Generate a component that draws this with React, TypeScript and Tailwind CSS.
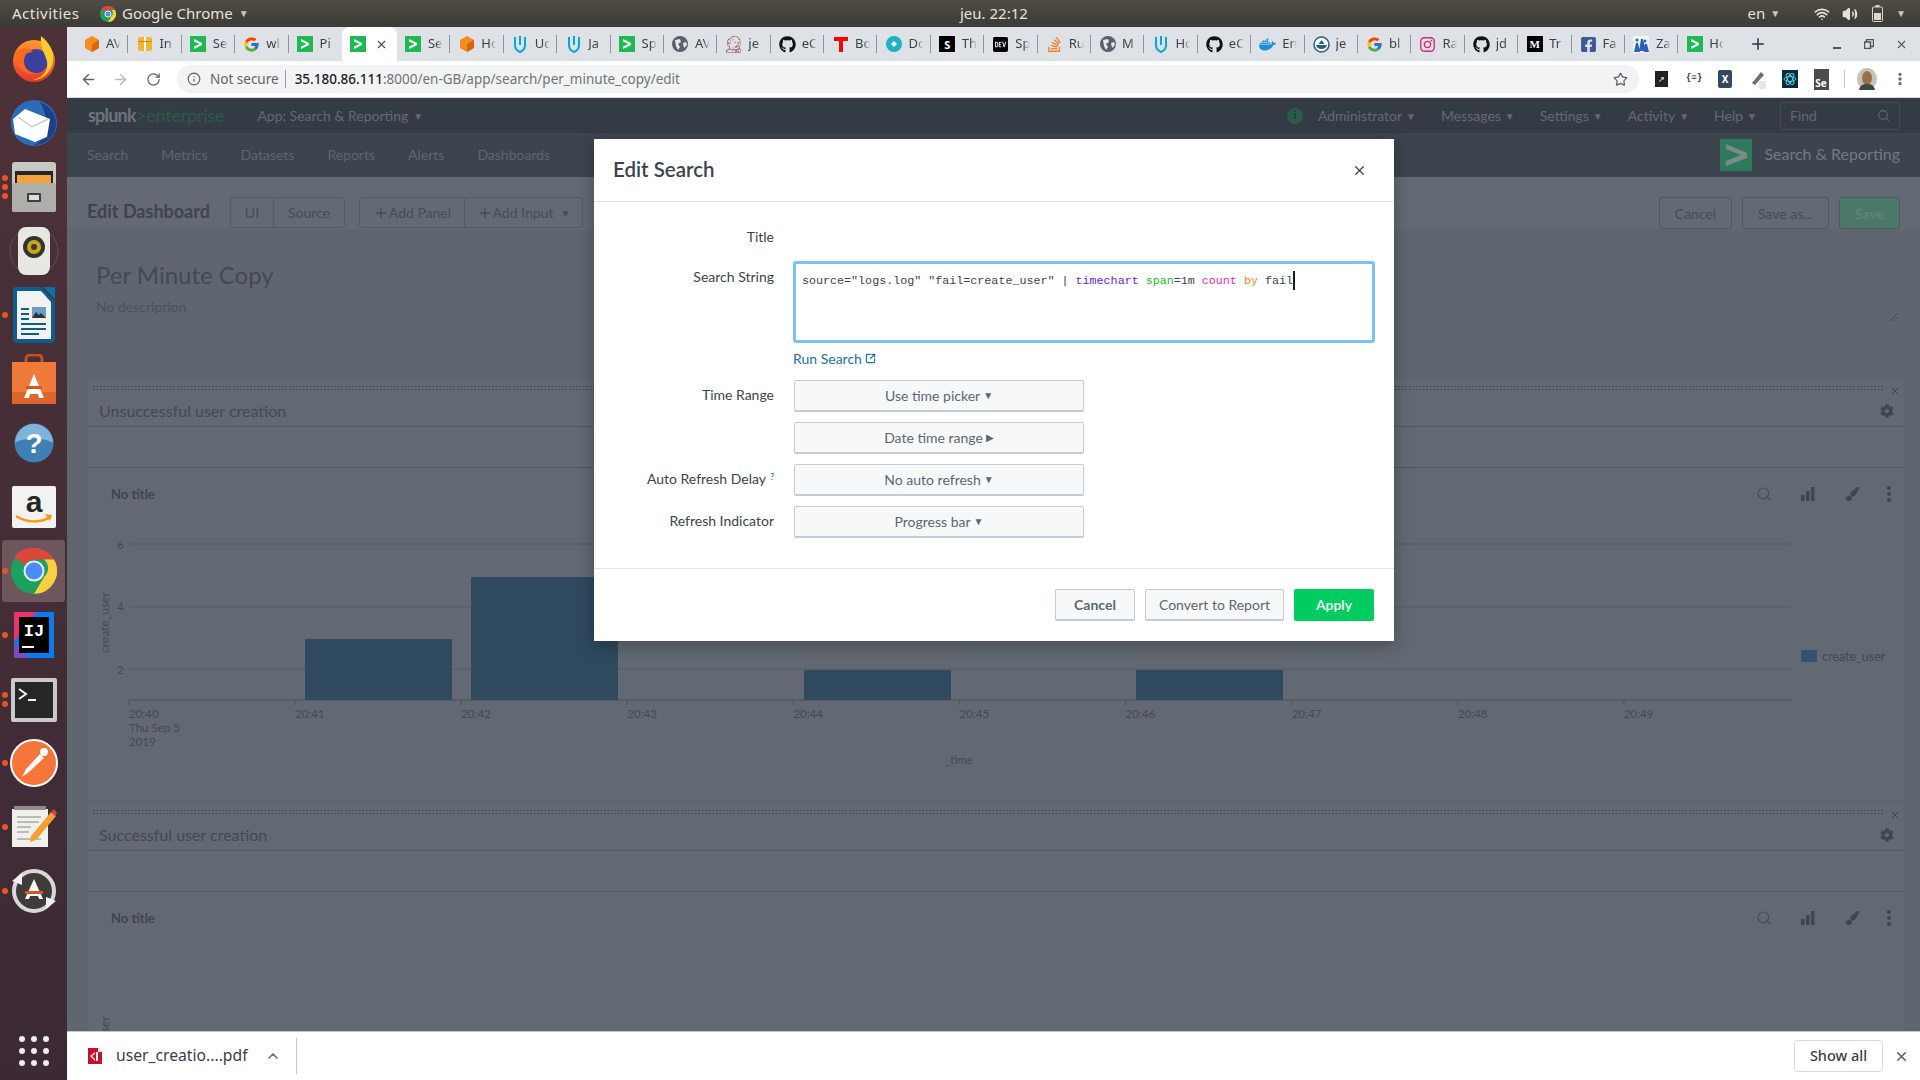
import { ReactNode } from "react";
import {
  ArrowLeft,
  ArrowRight,
  ChevronUp,
  Info,
  MoreVertical,
  Plus,
  RotateCw,
  Search,
  SquareArrowOutUpRight,
  Star,
  Volume2,
  Wifi,
  X,
} from "lucide-react";
import {
  FaCog,
  FaDev,
  FaDocker,
  FaFacebookSquare,
  FaGithub,
  FaInstagram,
  FaJenkins,
  FaPaintBrush,
  FaStackOverflow,
} from "react-icons/fa";
import { FcGoogle } from "react-icons/fc";

const SplunkFav = () => (
  <svg width="16" height="16" viewBox="0 0 16 16">
    <rect width="16" height="16" fill="#1fb954" />
    <path d="M4 3l8 4v2l-8 4v-2.4L9.6 8 4 5.4z" fill="#fff" />
  </svg>
);
const Hex = ({ color }: { color: string }) => (
  <svg width="16" height="16" viewBox="0 0 16 16">
    <path d="M8 0l7 4v8l-7 4-7-4V4z" fill={color} />
    <path d="M8 8l7-4v8l-7 4z" fill="#d9660f" />
  </svg>
);
const Box = () => (
  <svg width="16" height="16" viewBox="0 0 16 16">
    <rect x="1" y="1" width="14" height="14" rx="2" fill="#f5b335" />
    <rect x="7" y="1" width="2" height="14" fill="#fff" />
    <rect x="1" y="5" width="14" height="1" fill="#c98a17" />
  </svg>
);
const Uda = () => (
  <svg width="16" height="18" viewBox="0 0 16 18" fill="none" stroke="#02a9d8" strokeWidth="2">
    <path d="M3 2v8c0 4 2.500 6 5 7 2.500-1 5-3 5-7V2" />
    <path d="M8 1v9" />
  </svg>
);
const Globe = () => (
  <svg width="16" height="16" viewBox="0 0 16 16">
    <circle cx="8" cy="8" r="8" fill="#5a6068" />
    <path d="M3 4l5-1 1 3-3 2 2 3-2 3-2-4zM11 7l3-1 1 3-3 3z" fill="#e6e8ea" />
  </svg>
);
const Red = () => (
  <svg width="16" height="16" viewBox="0 0 16 16">
    <path d="M1 1h14v4h-5v11H6V5H1z" fill="#f00" />
  </svg>
);
const Teal = () => (
  <svg width="16" height="16" viewBox="0 0 16 16">
    <circle cx="8" cy="8" r="8" fill="#1db2c4" />
    <path d="M5 8l3-3 3 3-3 3z" fill="#fff" />
  </svg>
);
const BlackS = ({ t, serif }: { t: string; serif?: boolean }) => (
  <span
    className={`flex h-[16px] w-[16px] items-center justify-center bg-black text-[11px] font-bold leading-none text-white ${
      serif ? "font-['Liberation_Serif',serif]" : ""
    }`}
  >
    {t}
  </span>
);
const JeCircle = () => (
  <svg width="17" height="17" viewBox="0 0 17 17">
    <circle cx="8.500" cy="8.500" r="7.500" fill="#fff" stroke="#2a5f86" strokeWidth="1.500" />
    <path d="M3 9h11c-1 3-3 4-5.500 4S4 12 3 9z" fill="#2a5f86" />
    <path d="M8.500 4l3 4h-6z" fill="#2a5f86" />
  </svg>
);
const People = () => (
  <svg width="16" height="17" viewBox="0 0 16 17">
    <rect width="16" height="17" fill="#f2f4f7" />
    <path d="M1 16l2-9h2l2 9zM6 15l2-12h2l3 12zM11 16l1-8h2l2 8z" fill="#2a62b8" />
    <circle cx="4" cy="4" r="1.500" fill="#2a62b8" />
    <circle cx="12" cy="5" r="1.500" fill="#2a62b8" />
  </svg>
);

const g = <SplunkFav />;
const tabs: { icon: ReactNode; label: string; active?: boolean }[] = [
  { icon: <Hex color="#f58a1f" />, label: "AV" },
  { icon: <Box />, label: "In" },
  { icon: g, label: "Se" },
  { icon: <FcGoogle size={17} />, label: "wl" },
  { icon: g, label: "Pi" },
  { icon: g, label: "", active: true },
  { icon: g, label: "Se" },
  { icon: <Hex color="#f58a1f" />, label: "Ho" },
  { icon: <Uda />, label: "Uc" },
  { icon: <Uda />, label: "Ja" },
  { icon: g, label: "Sp" },
  { icon: <Globe />, label: "AV" },
  { icon: <FaJenkins size={17} color="#8f4a3a" />, label: "je" },
  { icon: <FaGithub size={17} color="#111" />, label: "eC" },
  { icon: <Red />, label: "Bo" },
  { icon: <Teal />, label: "Do" },
  { icon: <BlackS t="S" />, label: "Th" },
  { icon: <FaDev size={17} color="#000" />, label: "Sp" },
  { icon: <FaStackOverflow size={17} color="#f48024" />, label: "Ru" },
  { icon: <Globe />, label: "M" },
  { icon: <Uda />, label: "Ho" },
  { icon: <FaGithub size={17} color="#111" />, label: "eC" },
  { icon: <FaDocker size={17} color="#1d8fd8" />, label: "En" },
  { icon: <JeCircle />, label: "je" },
  { icon: <FcGoogle size={17} />, label: "bl" },
  { icon: <FaInstagram size={17} color="#d6267f" />, label: "Ra" },
  { icon: <FaGithub size={17} color="#111" />, label: "jd" },
  { icon: <BlackS t="M" serif />, label: "Tr" },
  { icon: <FaFacebookSquare size={17} color="#3b5998" />, label: "Fa" },
  { icon: <People />, label: "Za" },
  { icon: g, label: "Ho" },
];

const Firefox = () => (
  <svg width="50" height="50" viewBox="0 0 50 50">
    <defs>
      <linearGradient id="ff" x1="0" y1="0" x2="0" y2="1">
        <stop offset="0" stopColor="#ff9a2e" />
        <stop offset="1" stopColor="#e8342c" />
      </linearGradient>
    </defs>
    <circle cx="25" cy="27" r="21" fill="url(#ff)" />
    <circle cx="27" cy="27" r="12" fill="#3b3f9e" />
    <path d="M32 2c8 6 14 16 12 26-2 10-10 18-20 18 12-3 17-12 13-22-2-6-6-10-5-22z" fill="#ffcb2e" />
    <path d="M6 18c8-6 14-3 18 0-6 0-10 3-10 9 0 7 6 12 13 12-10 3-20-4-21-21z" fill="#ff6a1f" />
  </svg>
);
const Thunderbird = () => (
  <svg width="48" height="48" viewBox="0 0 48 48">
    <circle cx="24" cy="24" r="23" fill="#2b6cb8" />
    <path d="M30 3c10 4 16 12 16 21 0 13-10 22-22 22 14-6 16-26 6-43z" fill="#1a3f8f" />
    <path d="M3 20l12-10 25 10-3 18-12 5-20-8z" fill="#fff" />
    <path d="M8 18l14 10 16-8" fill="none" stroke="#c9ccd0" strokeWidth="1.500" />
  </svg>
);
const Files = () => (
  <svg width="44" height="50" viewBox="0 0 44 50">
    <rect width="44" height="50" rx="3" fill="#c9c9c4" />
    <rect x="3" y="9" width="38" height="12" fill="#262626" />
    <rect x="5" y="13" width="34" height="8" fill="#f2a13b" />
    <rect y="21" width="44" height="29" rx="2" fill="#aeaeaa" />
    <rect x="15" y="31" width="14" height="9" rx="1" fill="#3e3e3e" />
    <rect x="17" y="33" width="10" height="5" fill="#dddddd" />
  </svg>
);
const Rhythm = () => (
  <svg width="50" height="50" viewBox="0 0 50 50">
    <circle cx="25" cy="25" r="24" fill="none" stroke="#5b4f5d" strokeWidth="1" />
    <rect x="9" y="1" width="32" height="48" rx="8" fill="#e8e8e2" />
    <circle cx="25" cy="21" r="11" fill="#333" />
    <circle cx="25" cy="21" r="7" fill="#c5a918" />
    <circle cx="25" cy="21" r="3" fill="#3a3a3a" />
  </svg>
);
const Writer = () => (
  <svg width="42" height="56" viewBox="0 0 42 56">
    <path d="M2 0h26l14 14v38a4 4 0 0 1-4 4H4a4 4 0 0 1-4-4V2a2 2 0 0 1 2-2z" fill="#0e5e8c" />
    <path d="M4 4h24l10 11v37H4z" fill="#f2f2f2" />
    <path d="M30 0l12 12V0z" fill="#0b6fa8" />
    <rect x="8" y="21" width="8" height="2" fill="#0e5e8c" />
    <rect x="8" y="26" width="8" height="2" fill="#0e5e8c" />
    <rect x="8" y="31" width="8" height="2" fill="#0e5e8c" />
    <rect x="19" y="20" width="14" height="11" fill="#6b9fc6" />
    <path d="M19 31l4-6 3 3 2-2 5 5z" fill="#333" />
    <rect x="8" y="36" width="25" height="2" fill="#0e5e8c" />
    <rect x="8" y="41" width="25" height="2" fill="#0e5e8c" />
    <rect x="8" y="46" width="18" height="2" fill="#0e5e8c" />
  </svg>
);
const Store = () => (
  <svg width="44" height="50" viewBox="0 0 44 50">
    <path d="M14 12V5a4 4 0 0 1 4-4h8a4 4 0 0 1 4 4v7" fill="none" stroke="#c9501d" strokeWidth="3" />
    <path d="M0 8h44v42H0z" fill="#f07a3a" />
    <path d="M0 38h44v12H0z" fill="#e0652a" />
    <path d="M22 20l10 24h-5l-1-4h-8l-1 4h-5z" fill="#fff" />
    <rect x="14" y="32" width="16" height="3" fill="#e0521d" />
  </svg>
);
const Help = () => (
  <svg width="40" height="40" viewBox="0 0 40 40">
    <circle cx="20" cy="20" r="19.500" fill="#3f7fb5" />
    <path d="M1 20a19 19 0 0 1 38 0c-8-6-30-6-38 0z" fill="#7fb3dc" />
    <text x="20" y="30" textAnchor="middle" fontSize="28" fontWeight="700" fill="#fff" fontFamily="Liberation Sans, sans-serif">?</text>
  </svg>
);
const Amazon = () => (
  <svg width="44" height="42" viewBox="0 0 44 42">
    <rect width="44" height="42" rx="2" fill="#f2f2f2" />
    <text x="22" y="26" textAnchor="middle" fontSize="30" fontWeight="700" fill="#262626" fontFamily="Liberation Sans, sans-serif">a</text>
    <path d="M4 30c10 7 26 7 34 1" fill="none" stroke="#f59a13" strokeWidth="2.500" />
    <path d="M33 28l7 1-2 6z" fill="#f59a13" />
  </svg>
);
const Chrome = () => (
  <svg width="46" height="46" viewBox="0 0 46 46">
    <circle cx="23" cy="23" r="23" fill="#1ba160" />
    <path d="M23 0a23 23 0 0 1 20 11.500H23a11.500 11.500 0 0 0-10 6L4 8A23 23 0 0 1 23 0z" fill="#dc463b" />
    <path d="M43 11.500A23 23 0 0 1 23 46l10-17a11.500 11.500 0 0 0 0-17.500z" fill="#fdcf40" />
    <circle cx="23" cy="23" r="10.500" fill="#e9eef8" />
    <circle cx="23" cy="23" r="8.500" fill="#4b8bf5" />
  </svg>
);
const Idea = () => (
  <svg width="40" height="46" viewBox="0 0 40 46">
    <rect width="40" height="46" fill="#0a7bf0" />
    <path d="M0 0h22L0 30z" fill="#e8336b" />
    <path d="M0 30l14 16H0z" fill="#7a4bc2" />
    <rect x="5" y="5" width="30" height="36" fill="#000" />
    <rect x="8" y="34" width="12" height="2" fill="#fff" />
    <text x="20" y="24" textAnchor="middle" fontSize="17" fontWeight="700" fill="#fff" fontFamily="Liberation Mono, monospace">IJ</text>
  </svg>
);
const Terminal = () => (
  <svg width="46" height="44" viewBox="0 0 46 44" className="mt-[2px]">
    <rect width="46" height="44" rx="2" fill="#c9c9c9" />
    <rect x="4" y="4" width="38" height="36" fill="#262626" />
    <path d="M8 11l7 5-7 5" fill="none" stroke="#f2f2f2" strokeWidth="2" />
    <rect x="17" y="21" width="8" height="2" fill="#f2f2f2" />
  </svg>
);
const Postman = () => (
  <svg width="48" height="48" viewBox="0 0 48 48">
    <circle cx="24" cy="24" r="23" fill="#f7743a" stroke="#fff" strokeWidth="2" />
    <path d="M12 38l4-8 14-15 4 4-15 14z" fill="#fff" />
    <circle cx="34" cy="13" r="4" fill="#fff" />
  </svg>
);
const Gedit = () => (
  <svg width="46" height="42" viewBox="0 0 46 42">
    <rect x="1" y="3" width="36" height="38" fill="#f1f1ec" />
    <path d="M3 0h32v4H3z" fill="#8d8d8d" />
    <path d="M6 11h24M6 16h22M6 21h14M6 26h12M6 33h24" stroke="#a9a9a9" strokeWidth="1.500" />
    <path d="M20 30l20-24 5 4-20 24-6 2z" fill="#f2a02f" />
    <path d="M40 6l3-3 3 4-2 3z" fill="#d8433a" />
  </svg>
);
const Updater = () => (
  <svg width="44" height="48" viewBox="0 0 44 48">
    <circle cx="22" cy="24" r="20" fill="#3d3c3a" stroke="#d8d8d8" strokeWidth="4" />
    <path d="M22 12l9 20h-4l-1-3h-8l-1 3h-4z" fill="#fff" />
    <rect x="13" y="24" width="18" height="3" fill="#e0521d" />
    <path d="M0 14l10-8v12zM44 34l-10 8V30z" fill="#f2f2f2" />
  </svg>
);

const dock: { icon: ReactNode; dots: number; active?: boolean }[] = [
  { icon: <Firefox />, dots: 0 },
  { icon: <Thunderbird />, dots: 0 },
  { icon: <Files />, dots: 3 },
  { icon: <Rhythm />, dots: 0 },
  { icon: <Writer />, dots: 1 },
  { icon: <Store />, dots: 0 },
  { icon: <Help />, dots: 0 },
  { icon: <Amazon />, dots: 0 },
  { icon: <Chrome />, dots: 1, active: true },
  { icon: <Idea />, dots: 1 },
  { icon: <Terminal />, dots: 2 },
  { icon: <Postman />, dots: 1 },
  { icon: <Gedit />, dots: 1 },
  { icon: <Updater />, dots: 1 },
];

const Dock = () => (
  <div className="flex w-[67px] shrink-0 flex-col bg-gradient-to-b from-[#4d3138] to-[#3b2a35]">
    {dock.map((d, i) => (
      <div key={i} className="relative flex h-[64px] items-center justify-center">
        {d.active && <div className="absolute inset-x-[2px] inset-y-[1px] rounded-[3px] bg-[#6d565c]" />}
        <div className="relative flex items-center justify-center">{d.icon}</div>
        {d.dots > 0 && (
          <div className="absolute left-[2px] top-0 flex h-full flex-col justify-center gap-[3px]">
            {Array.from({ length: d.dots }).map((_, j) => (
              <span key={j} className="h-[6px] w-[6px] rounded-full bg-[#e95420]" />
            ))}
          </div>
        )}
      </div>
    ))}
    <div className="mt-auto mb-[14px] grid grid-cols-3 gap-x-[6px] gap-y-[6px] self-center">
      {Array.from({ length: 9 }).map((_, i) => (
        <span key={i} className="h-[6px] w-[6px] rounded-full bg-[#f0eef0]" />
      ))}
    </div>
  </div>
);

const TopBar = () => (
  <div className="flex h-[27px] items-center bg-gradient-to-b from-[#4f4c44] to-[#3b3a35] font-['Noto_Sans',sans-serif] text-[15px] text-[#e4e2dc]">
    <div className="flex w-[960px] items-center">
      <span className="ml-[12px] w-[88px] tracking-[0.5px]">Activities</span>
      <svg width="16" height="16" viewBox="0 0 16 16" className="mr-[6px]">
        <circle cx="8" cy="8" r="8" fill="#1ba160" />
        <path d="M8 0a8 8 0 0 1 7 4H8a4 4 0 0 0-3.500 2L1.500 2.800A8 8 0 0 1 8 0z" fill="#dc463b" />
        <path d="M15 4a8 8 0 0 1-7 12l3.500-6a4 4 0 0 0 0-6z" fill="#fdcf40" />
        <circle cx="8" cy="8" r="3" fill="#4b8bf5" stroke="#fff" />
      </svg>
      <span>Google Chrome</span>
      <span className="ml-[6px] text-[10px] text-[#c9c6be]">▼</span>
    </div>
    <span>jeu. 22:12</span>
    <div className="flex flex-1 items-center justify-end">
      <span>en</span>
      <span className="ml-[5px] text-[10px] text-[#c9c6be]">▼</span>
      <Wifi size={16} strokeWidth={2.5} className="ml-[34px]" />
      <Volume2 size={16} className="ml-[12px] fill-[#e4e2dc]" />
      <svg width="11" height="17" viewBox="0 0 11 17" className="ml-[14px]">
        <rect x="3.500" y="0" width="4" height="2" fill="#d9d7d0" />
        <rect x="0.500" y="2" width="10" height="14.500" rx="1" fill="none" stroke="#d9d7d0" />
        <rect x="2" y="8" width="7" height="7" fill="#d9d7d0" />
      </svg>
      <span className="ml-[13px] mr-[14px] text-[10px] text-[#c9c6be]">▼</span>
    </div>
  </div>
);

const TabStrip = () => (
  <div className="flex h-[34px] items-stretch bg-[#dee1e6] pl-[8px] font-['Noto_Sans',sans-serif] text-[13px] text-[#3c4043]">
    {tabs.map((t, i) =>
      t.active ? (
        <div key={i} className="flex w-[55px] shrink-0 items-center rounded-t-[8px] bg-white pl-[8px]">
          {t.icon}
          <X size={13} className="ml-[9px] text-[#45484c]" />
        </div>
      ) : (
        <div key={i} className="flex w-[53.4px] shrink-0 items-center pl-[8px]">
          <span className="flex w-[17px] shrink-0 justify-center">{t.icon}</span>
          <span className="ml-[6px] w-[15px] whitespace-nowrap [mask-image:linear-gradient(to_right,black_55%,transparent)]">{t.label}</span>
          {tabs[i + 1] && !tabs[i + 1].active && <span className="ml-auto h-[18px] w-px bg-[#8e9196]" />}
        </div>
      ),
    )}
    <Plus size={18} strokeWidth={2} className="ml-[17px] self-center text-[#2f3135]" />
    <div className="ml-auto flex items-center pr-[12px] text-[#53565a]">
      <span className="mt-[8px] h-[2px] w-[8px] bg-[#53565a]" />
      <svg width="10" height="10" viewBox="0 0 10 10" className="ml-[23px]">
        <rect x="2.500" y="0.500" width="7" height="7" fill="none" stroke="#53565a" strokeWidth="1.500" />
        <rect x="0.500" y="3" width="6" height="6.500" fill="#dee1e6" stroke="#53565a" strokeWidth="1.500" />
      </svg>
      <X size={13} className="ml-[21px]" />
    </div>
  </div>
);

const Toolbar = () => (
  <div className="flex h-[37px] items-center border-b border-[#d5d8dc] bg-white pl-[13px] font-['Noto_Sans',sans-serif]">
    <ArrowLeft size={17} className="text-[#5f6368]" />
    <ArrowRight size={17} className="ml-[15px] text-[#b8bbbf]" />
    <RotateCw size={15} className="ml-[17px] text-[#5f6368]" />
    <div className="ml-[16px] flex h-[28px] w-[1462px] items-center rounded-full bg-[#f1f3f4] pl-[10px] text-[13.500px]">
      <Info size={14} className="text-[#5f6368]" />
      <span className="ml-[9px] text-[#5f6368]">Not secure</span>
      <span className="ml-[6px] h-[18px] w-px bg-[#9aa0a6]" />
      <span className="ml-[9px] font-medium text-[#202124]">35.180.86.111</span>
      <span className="text-[#6f7377]">:8000/en-GB/app/search/per_minute_copy/edit</span>
      <Star size={15} className="ml-auto mr-[11px] text-[#5f6368]" />
    </div>
    <div className="ml-[15.500px] flex h-[16px] w-[13px] items-center justify-center bg-[#222] text-[8px] text-white">↗</div>
    <span className="ml-[16.500px] w-[20px] text-center font-['Liberation_Mono',monospace] text-[9px] font-bold text-[#333]">{"{≡}"}</span>
    <div className="ml-[14px] flex h-[18px] w-[14px] items-center justify-center rounded-[2px] bg-[#34495e] text-[10px] font-bold text-white">X</div>
    <svg width="16" height="20" viewBox="0 0 16 20" className="ml-[18px]">
      <path d="M2 14L11 3l3 3-9 10z" fill="#6b6f73" />
      <rect x="9" y="12" width="7" height="8" rx="1" fill="#e4e6e8" />
    </svg>
    <svg width="16" height="18" viewBox="0 0 16 18" className="ml-[16px]">
      <rect width="16" height="18" fill="#0f2a38" />
      <g fill="none" stroke="#45cde6" strokeWidth="1">
        <ellipse cx="8" cy="9" rx="6" ry="2.500" />
        <ellipse cx="8" cy="9" rx="6" ry="2.500" transform="rotate(60 8 9)" />
        <ellipse cx="8" cy="9" rx="6" ry="2.500" transform="rotate(120 8 9)" />
      </g>
    </svg>
    <div className="ml-[15.500px] flex h-[21px] w-[15px] flex-col justify-end bg-[#4a4d51] text-center text-[10px] font-bold leading-[13px] text-white">Se</div>
    <span className="ml-[15.500px] h-[18px] w-px bg-[#c4c7cb]" />
    <svg width="20" height="22" viewBox="0 0 20 22" className="ml-[12px]">
      <ellipse cx="10" cy="11" rx="10" ry="11" fill="#c9c3b6" />
      <ellipse cx="10" cy="10" rx="5" ry="7" fill="#9a6f4f" />
      <path d="M2 22c1-5 4-6 8-6s7 1 8 6z" fill="#3d4a3f" />
    </svg>
    <MoreVertical size={16} strokeWidth={3} className="ml-[15px] text-[#5f6368]" />
  </div>
);

const Caret = ({ className }: { className?: string }) => (
  <span className={`inline-block text-[10px] leading-none ${className ?? ""}`}>▼</span>
);

const SplunkBar = () => (
  <div className="flex h-[35px] items-center bg-[#343b45] pl-[21px] font-['Lato',sans-serif] text-[14px] text-[#636a74]">
    <span className="w-[48px] text-[18px] font-bold tracking-[-0.8px] text-[#6e747c]">splunk</span>
    <span className="text-[18px] tracking-[-0.2px] text-[#2c5c49]">&gt;enterprise</span>
    <span className="ml-[33px]">App: Search &amp; Reporting</span>
    <Caret className="ml-[5px]" />
    <div className="ml-auto flex items-center pr-[20px]">
      <span className="flex h-[16px] w-[16px] items-center justify-center rounded-full bg-[#2c5c49] text-[11px] font-bold text-[#1e3b34]">i</span>
      <span className="ml-[15px]">Administrator</span>
      <Caret className="ml-[4px]" />
      <span className="ml-[25px]">Messages</span>
      <Caret className="ml-[4px]" />
      <span className="ml-[25px]">Settings</span>
      <Caret className="ml-[4px]" />
      <span className="ml-[25px]">Activity</span>
      <Caret className="ml-[4px]" />
      <span className="ml-[25px]">Help</span>
      <Caret className="ml-[4px]" />
      <div className="ml-[23px] flex h-[28px] w-[120px] items-center justify-between rounded-[3px] border border-[#434a54] px-[9px]">
        <span>Find</span>
        <Search size={13} />
      </div>
    </div>
  </div>
);

const NavBar = () => (
  <div className="flex h-[44px] items-center bg-[#3c444e] pb-[2px] pl-[20px] pr-[20px] font-['Lato',sans-serif] text-[14px] text-[#5e6670]">
    <div className="flex gap-[33px]">
      {["Search", "Metrics", "Datasets", "Reports", "Alerts", "Dashboards"].map((n) => (
        <span key={n}>{n}</span>
      ))}
    </div>
    <div className="ml-auto flex items-center">
      <svg width="32" height="32" viewBox="0 0 32 32" className="mt-[2px]">
        <rect width="32" height="32" fill="#2f7a5a" />
        <path d="M6 5l21 9v5L6 27v-5l15-6L6 10z" fill="#7d8a88" />
      </svg>
      <span className="ml-[12px] text-[16px] text-[#737a83]">Search &amp; Reporting</span>
    </div>
  </div>
);

const HeadBtn = ({ className, children }: { className?: string; children: ReactNode }) => (
  <div className={`flex h-[32px] items-center justify-center rounded-[3px] border border-[#505760] ${className ?? ""}`}>{children}</div>
);

const DashHeader = () => (
  <div className="flex h-[32px] items-start text-[14px] text-[#454c56]">
    <span className="text-[18px] font-bold leading-[29px] text-[#3e444e]">Edit Dashboard</span>
    <div className="ml-[20px] flex h-[31px] w-[115px] rounded-[3px] border border-[#545b64]">
      <span className="flex w-[43px] items-center justify-center border-r border-[#545b64]">UI</span>
      <span className="flex flex-1 items-center justify-center">Source</span>
    </div>
    <div className="ml-[14px] flex h-[31px] w-[224px] rounded-[3px] border border-[#545b64]">
      <span className="flex w-[105px] items-center justify-center border-r border-[#545b64]">
        <Plus size={16} />
        Add Panel
      </span>
      <span className="flex flex-1 items-center justify-center">
        <Plus size={16} />
        Add Input
        <Caret className="ml-[7px]" />
      </span>
    </div>
    <div className="ml-auto flex gap-[10px]">
      <HeadBtn className="w-[73px]">Cancel</HeadBtn>
      <HeadBtn className="w-[87px]">Save as...</HeadBtn>
      <HeadBtn className="w-[61px] border-[#4c7868] bg-[#4c7868] font-bold text-[#5b8577]">Save</HeadBtn>
    </div>
  </div>
);

const BarsIcon = () => (
  <svg width="14" height="14" viewBox="0 0 14 14" fill="#3f4650">
    <rect x="0" y="8" width="3.500" height="6" />
    <rect x="5" y="4" width="3.500" height="10" />
    <rect x="10" y="0" width="3.500" height="14" />
  </svg>
);

const PanelTools = () => (
  <div className="ml-auto flex items-center text-[#3f4650]">
    <Search size={16} strokeWidth={1.800} className="text-[#454c56]" />
    <span className="ml-[29px] flex">
      <BarsIcon />
    </span>
    <FaPaintBrush size={14} className="ml-[30px]" />
    <span className="ml-[28px] mr-[14px] flex flex-col gap-[2px]">
      <span className="h-[4px] w-[4px] rounded-full bg-[#3f4650]" />
      <span className="h-[4px] w-[4px] rounded-full bg-[#3f4650]" />
      <span className="h-[4px] w-[4px] rounded-full bg-[#3f4650]" />
    </span>
  </div>
);

const bars = [
  { x: 305, w: 147, top: 639 },
  { x: 471, w: 147, top: 577 },
  { x: 804, w: 147, top: 670 },
  { x: 1136, w: 147, top: 670 },
];
const ticks = ["20:40", "20:41", "20:42", "20:43", "20:44", "20:45", "20:46", "20:47", "20:48", "20:49"];

const Chart = () => (
  <svg width="1818" height="280" className="block font-['Lato',sans-serif]">
    <g transform="translate(-87,-520)" fontSize="11.500" fill="#434a54">
      {[544, 607, 669].map((y) => (
        <line key={y} x1="129" x2="1791" y1={y} y2={y} stroke="#565d67" />
      ))}
      <line x1="129" x2="1791" y1="700" y2="700" stroke="#4c535d" />
      <text x="117" y="549">6</text>
      <text x="117" y="611">4</text>
      <text x="117" y="674">2</text>
      <text transform="translate(109,653) rotate(-90)" fontSize="12">create_user</text>
      {bars.map((b) => (
        <rect key={b.x} x={b.x} y={b.top} width={b.w} height={700 - b.top} fill="#2f495f" />
      ))}
      {ticks.map((t, i) => (
        <g key={t}>
          <line x1={129 + i * 166.100} x2={129 + i * 166.100} y1="700" y2="705" stroke="#4c535d" />
          <text x={129 + i * 166.100} y="718">{t}</text>
        </g>
      ))}
      <text x="129" y="732">Thu Sep 5</text>
      <text x="129" y="746">2019</text>
      <text x="945" y="764">_time</text>
      <rect x="1801" y="650" width="16" height="12" fill="#2f5472" />
      <text x="1822" y="661" fontSize="12.500">create_user</text>
    </g>
  </svg>
);

const ChartStub = () => (
  <svg width="1818" height="90" className="block font-['Lato',sans-serif]">
    <text transform="translate(22,133) rotate(-90)" fontSize="12" fill="#434a54">create_user</text>
  </svg>
);

const Panel = ({ title, children }: { title: string; children: ReactNode }) => (
  <div className="ml-[20px] mr-[15px] bg-[#626973]">
    <div className="h-[47px] border-b border-[#4f565f] pt-[5px]">
      <div className="flex h-[15px] items-start">
        <div className="ml-[5px] h-[6px] flex-1 bg-[radial-gradient(#3f4650_1px,transparent_1px)] bg-[length:3.500px_3px]" />
        <X size={12} className="ml-[4px] mr-[4px] text-[#3f4650]" />
      </div>
      <div className="flex h-[21px] items-center pl-[12px] pr-[11px] text-[16px] text-[#434a54]">
        {title}
        <FaCog size={14} className="ml-auto text-[#3f4650]" />
      </div>
    </div>
    <div className="h-[41px] border-b border-[#4f565f]" />
    <div className="flex h-[52px] items-start pl-[24px] pt-[18px]">
      <span className="text-[13px] font-bold leading-[17px] text-[#3f4650]">No title</span>
      <PanelTools />
    </div>
    {children}
  </div>
);

const Backdrop = () => (
  <div className="min-h-0 flex-1 overflow-hidden bg-[#5f6670] font-['Lato',sans-serif]">
    <div className="bg-[#636a74] pl-[20px] pr-[20px] pt-[20px]">
      <DashHeader />
    </div>
    <div className="flex items-end justify-between pl-[29px] pr-[21px] pt-[30px]">
      <div>
        <h1 className="text-[24px] leading-[32px] text-[#434a54]">Per Minute Copy</h1>
        <p className="mt-[7px] text-[14px] leading-[18px] text-[#4b525c]">No description</p>
      </div>
      <svg width="10" height="10" viewBox="0 0 10 10" stroke="#434a54" className="mb-[-6px]">
        <path d="M1 9l8-8M5 9l4-4" />
      </svg>
    </div>
    <div className="mt-[64px] flex flex-col gap-[4px]">
      <Panel title="Unsuccessful user creation">
        <Chart />
      </Panel>
      <Panel title="Successful user creation">
        <ChartStub />
      </Panel>
    </div>
  </div>
);

const DownloadBar = () => (
  <div className="flex h-[49px] shrink-0 items-center border-t border-[#c4c7cb] bg-white pl-[21px] font-['Noto_Sans',sans-serif] text-[#3c4043]">
    <svg width="14" height="16" viewBox="0 0 14 16">
      <path d="M0 0h10l4 4v12H0z" fill="#c8102e" />
      <path d="M10 0l4 4h-4zM8 4h2v9H8zM2 8l5-4v2L4 8l3 3v2z" fill="#f2f2f2" />
    </svg>
    <span className="ml-[14px] text-[15.700px]">user_creatio....pdf</span>
    <ChevronUp size={16} strokeWidth={2.500} className="ml-[17px] text-[#6b6f73]" />
    <span className="ml-[15px] h-[36px] w-px bg-[#c4c7cb]" />
    <div className="ml-auto flex h-[32px] w-[89px] items-center justify-center rounded-[4px] border border-[#d5d8dc] text-[14.500px] font-medium">Show all</div>
    <X size={15} strokeWidth={2.500} className="ml-[11px] mr-[11px] text-[#5f6368]" />
  </div>
);

const Row = ({ label, children, className }: { label: ReactNode; children?: ReactNode; className?: string }) => (
  <div className={`flex ${className ?? ""}`}>
    <div className="w-[180px] shrink-0 text-right text-[14px] leading-[20px] text-[#3c444d]">{label}</div>
    <div className="ml-[19px] flex-1">{children}</div>
  </div>
);

const Pick = ({ label, caret = "▼" }: { label: string; caret?: string }) => (
  <div className="ml-[1px] flex h-[32px] w-[290px] items-center justify-center rounded-[2px] border border-b-2 border-[#c3cbd4] bg-[#f7f8fa] pb-[1px] text-[14px] text-[#5c6773]">
    {label}
    <span className="ml-[3px] text-[10px]">{caret}</span>
  </div>
);

const EditSearch = () => (
  <div className="absolute left-[594px] top-[139px] w-[800px] bg-white font-['Lato',sans-serif] shadow-[0_4px_16px_rgba(0,0,0,0.3)]">
    <div className="flex h-[63px] items-center justify-between border-b border-[#e1e4e8] pb-[2px] pl-[19px] pr-[27px]">
      <h2 className="text-[20.500px] font-semibold text-[#3c444d]">Edit Search</h2>
      <X size={15} strokeWidth={2} className="mt-[3px] text-[#3c444d]" />
    </div>
    <div className="pb-[30px] pt-[24px]">
      <Row label="Title" className="h-[22px] items-center" />
      <Row label={<span className="block pt-[6px]">Search String</span>} className="mt-[13px]">
        <div className="flex h-[82px] w-[582px] rounded-[3px] border-[3px] border-[#7cc0f5] pl-[6px] pt-[8px]">
          <span className="h-[18px] whitespace-pre font-['Liberation_Mono',monospace] text-[11.700px] leading-[18px] text-[#3c444d]">
            source="logs.log" "fail=create_user" | <span className="text-[#6a1bf0]">timechart</span>{" "}
            <span className="text-[#1fb82d]">span</span>=1m <span className="text-[#f01fc4]">count</span>{" "}
            <span className="text-[#f57f17]">by</span> fail
          </span>
          <span className="mt-[-1px] h-[19px] w-[2px] bg-[#1a1c20]" />
        </div>
        <div className="mt-[5px] flex h-[20px] items-center text-[14px] text-[#1e6fa8]">
          Run Search
          <SquareArrowOutUpRight size={11} strokeWidth={2.500} className="ml-[3px]" />
        </div>
      </Row>
      <div className="mt-[12px] flex flex-col gap-[10px]">
        <Row label={<span className="block pb-[2px]">Time Range</span>} className="items-center">
          <Pick label="Use time picker" />
        </Row>
        <Row label="" className="items-center">
          <Pick label="Date time range" caret="▶" />
        </Row>
        <Row
          label={
            <span className="block pb-[2px]">
              Auto Refresh Delay
              <sup className="ml-[4px] text-[9px] text-[#1e6fa8]">?</sup>
            </span>
          }
          className="items-center"
        >
          <Pick label="No auto refresh" />
        </Row>
        <Row label={<span className="block pb-[2px]">Refresh Indicator</span>} className="items-center">
          <Pick label="Progress bar" />
        </Row>
      </div>
    </div>
    <div className="flex justify-end gap-[10px] border-t border-[#e1e4e8] pb-[20px] pr-[20px] pt-[20px] text-[14px]">
      <div className="flex h-[32px] w-[80px] items-center justify-center rounded-[2px] border border-b-2 border-[#c3cbd4] bg-[#f7f8fa] pb-[1px] font-bold text-[#5c6773]">Cancel</div>
      <div className="flex h-[32px] w-[139px] items-center justify-center rounded-[2px] border border-b-2 border-[#c3cbd4] bg-[#f7f8fa] pb-[1px] text-[#5c6773]">Convert to Report</div>
      <div className="flex h-[32px] w-[80px] items-center justify-center rounded-[2px] bg-[#00cc5f] pb-[1px] font-semibold text-white">Apply</div>
    </div>
  </div>
);

export default function App() {
  return (
    <div className="relative flex h-[1080px] w-[1920px] flex-col overflow-hidden">
      <TopBar />
      <div className="flex min-h-0 flex-1">
        <Dock />
        <div className="flex min-w-0 flex-1 flex-col">
          <TabStrip />
          <Toolbar />
          <SplunkBar />
          <NavBar />
          <Backdrop />
          <DownloadBar />
        </div>
      </div>
      <EditSearch />
    </div>
  );
}
